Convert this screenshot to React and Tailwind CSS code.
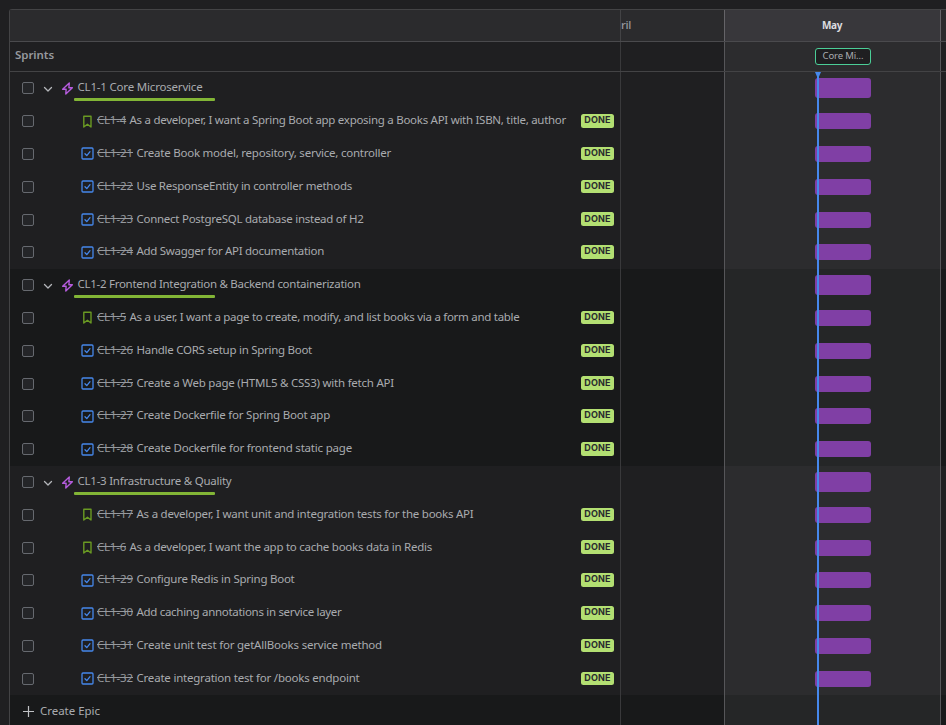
import React from "react";

const GROUPS = [
  {
    id: "CL1-1",
    title: "Core Microservice",
    width: 125,
    items: [
      ["story", "CL1-4", "As a developer, I want a Spring Boot app exposing a Books API with ISBN, title, author", 29, 436.5],
      ["task", "CL1-21", "Create Book model, repository, service, controller", 36, 254.5],
      ["task", "CL1-22", "Use ResponseEntity in controller methods", 36, 215.5],
      ["task", "CL1-23", "Connect PostgreSQL database instead of H2", 36, 227],
      ["task", "CL1-24", "Add Swagger for API documentation", 36, 187.5],
    ],
  },
  {
    id: "CL1-2",
    title: "Frontend Integration & Backend containerization",
    width: 283,
    items: [
      ["story", "CL1-5", "As a user, I want a page to create, modify, and list books via a form and table", 29, 390],
      ["task", "CL1-26", "Handle CORS setup in Spring Boot", 36, 175.5],
      ["task", "CL1-25", "Create a Web page (HTML5 & CSS3) with fetch API", 36, 257.5],
      ["task", "CL1-27", "Create Dockerfile for Spring Boot app", 36, 193.5],
      ["task", "CL1-28", "Create Dockerfile for frontend static page", 36, 215.5],
    ],
  },
  {
    id: "CL1-3",
    title: "Infrastructure & Quality",
    width: 154,
    items: [
      ["story", "CL1-17", "As a developer, I want unit and integration tests for the books API", 36, 337],
      ["story", "CL1-6", "As a developer, I want the app to cache books data in Redis", 29, 302.5],
      ["task", "CL1-29", "Configure Redis in Spring Boot", 36, 158],
      ["task", "CL1-30", "Add caching annotations in service layer", 36, 205],
      ["task", "CL1-31", "Create unit test for getAllBooks service method", 36, 245.5],
      ["task", "CL1-32", "Create integration test for /books endpoint", 36, 223],
    ],
  },
];

// Tracks the text out or in so that it fills the given width.
function Fitted({ width, className = "", children }) {
  const ref = React.useRef(null);
  const [spacing, setSpacing] = React.useState(0);
  const text = String(children);
  React.useLayoutEffect(() => {
    const measure = () => {
      const el = ref.current;
      if (!el) return;
      el.style.letterSpacing = "0px";
      const next = (width - el.getBoundingClientRect().width) / text.length;
      el.style.letterSpacing = next + "px";
      setSpacing(next);
    };
    measure();
    document.fonts.ready.then(measure);
  }, [width, text]);
  return (
    <span ref={ref} className={"inline-block whitespace-pre " + className} style={{ letterSpacing: spacing + "px" }}>
      {text}
    </span>
  );
}

function Checkbox() {
  return <span className="size-3 shrink-0 rounded-[2px] border border-[#66696f] bg-[#242528]" />;
}

function EpicIcon() {
  return (
    <svg className="size-[13px] shrink-0" viewBox="0 0 16 16" fill="none" stroke="#b65cde" strokeWidth="1.7" strokeLinejoin="round">
      <path d="M10.2 1.2 2 8.9h4.3L5.9 14.8 14 7.1H9.7Z" />
    </svg>
  );
}

function StoryIcon() {
  return (
    <svg className="h-[13px] w-[13px] shrink-0" viewBox="0 0 13 13" fill="none" stroke="#6a9a23" strokeWidth="1.4" strokeLinejoin="round">
      <path d="M2.8 1.2h7.2v10.8L6.4 9.2 2.8 12Z" />
    </svg>
  );
}

function TaskIcon() {
  return (
    <svg className="h-[13px] w-[13px] shrink-0" viewBox="0 0 13 13" fill="none" stroke="#4688ec" strokeWidth="1.3" strokeLinejoin="round" strokeLinecap="round">
      <rect x="1" y="1" width="11" height="11" rx="1" />
      <path d="M4 6.8 5.8 8.6 9 4.7" />
    </svg>
  );
}

function Timeline({ children }) {
  return (
    <div className="flex flex-1">
      <div className="w-[104px] shrink-0 border-l border-[#39393b]" />
      <div className="flex w-[217px] shrink-0 items-center border-x border-[#565659] bg-white/[0.06] pl-[90px]">
        {children}
      </div>
    </div>
  );
}

function EpicRow({ id, title, width }) {
  return (
    <div className="flex h-[32.8px]">
      <div className="relative flex w-[610px] shrink-0 items-center pl-3">
        <Checkbox />
        <svg className="mt-[2px] ml-2 size-3" viewBox="0 0 12 12" fill="none" stroke="#b4b6ba" strokeWidth="1.3" strokeLinecap="round" strokeLinejoin="round">
          <path d="M2.5 4.5 6 8l3.5-3.5" />
        </svg>
        <span className="ml-[7px] flex pt-px"><EpicIcon /></span>
        <Fitted width={width} className="-mt-[2px] ml-[3.5px]">{id + " " + title}</Fitted>
        <span className="absolute top-[26px] left-16 h-[3px] w-[141px] rounded-[1px] bg-[#82b536]" />
      </div>
      <Timeline>
        <div className="h-5 w-14 rounded-[3px] bg-[#803fa5]" />
      </Timeline>
    </div>
  );
}

function ItemRow({ item }) {
  const [kind, id, title, idWidth, width] = item;
  return (
    <div className="flex h-[32.8px]">
      <div className="flex w-[610px] shrink-0 items-center pl-3">
        <Checkbox />
        <span className="ml-[47px] flex">{kind === "story" ? <StoryIcon /> : <TaskIcon />}</span>
        <Fitted width={idWidth} className="-mt-[2px] ml-[3px] text-[#96999e] line-through">{id}</Fitted>
        <Fitted width={width} className="-mt-[2px] ml-[3.5px]">{title}</Fitted>
        <span className="-mt-[0.8px] mr-1.5 ml-auto flex h-[13.5px] w-[33px] items-center justify-center rounded-[2.5px] bg-[#b3df72] font-['Inter'] text-[9px] font-bold text-[#292a2e]">
          <Fitted width={26.5} className="-mt-px">DONE</Fitted>
        </span>
      </div>
      <Timeline>
        <div className="h-4 w-14 rounded-[3px] bg-[#803fa5]" />
      </Timeline>
    </div>
  );
}

export default function App() {
  return (
    <div className="h-[725px] w-[946px] overflow-hidden bg-[#1f1f21] pt-[9px] pl-[9px] font-['Noto_Sans',sans-serif] text-[11.5px] leading-4 text-[#a9abaf]">
      <div className="relative h-[720px] w-[940px] rounded-tl-[3px] border-t border-l border-[#434345]">
        <div className="flex h-8 border-b border-[#4a4a4d] bg-[#2b2b2d]">
          <div className="w-[610px] shrink-0" />
          <div className="flex w-[104px] shrink-0 items-center border-l border-[#434345] font-medium text-[#96999e]">
            <Fitted width={10} className="-mt-px">ril</Fitted>
          </div>
          <div className="flex w-[217px] shrink-0 items-center justify-center border-x border-[#656468] bg-[#38373b] font-bold text-[#dcdde0]">
            <Fitted width={20} className="-mt-px -ml-px text-[10px]">May</Fitted>
          </div>
        </div>
        <div className="flex h-[30px] border-b border-[#434345]">
          <div className="w-[610px] shrink-0 pt-[5px] pl-[5px] font-semibold text-[#96999e]">
            <Fitted width={39}>Sprints</Fitted>
          </div>
          <Timeline>
            <div className="flex h-[17px] w-14 items-center justify-center rounded-[3px] border border-[#4bce97] bg-[#1f1f21] text-[9.5px]">
              <Fitted width={41} className="-mt-px">Core Mi…</Fitted>
            </div>
          </Timeline>
        </div>
        {GROUPS.map((g, i) => (
          <div key={g.id} className={i % 2 ? "bg-[#18191a]" : "bg-[#1f1f21]"}>
            <EpicRow id={g.id} title={g.title} width={g.width} />
            {g.items.map((item) => (
              <ItemRow key={item[1]} item={item} />
            ))}
          </div>
        ))}
        <div className="flex h-[40px] bg-[#18191a]">
          <div className="flex w-[610px] shrink-0 items-start pt-[8px] pl-3">
            <svg className="mt-[2px] size-[13px]" viewBox="0 0 13 13" stroke="#c0c2c5" strokeWidth="1.2">
              <path d="M6.5 1v11M1 6.5h11" />
            </svg>
            <Fitted width={60} className="ml-[5px]">Create Epic</Fitted>
          </div>
          <Timeline />
        </div>
        <div className="absolute top-[62px] left-[805px] flex h-[660px] w-[6px] flex-col items-center">
          <svg className="h-[5px] w-[6px]" viewBox="0 0 6 5" fill="#4688ec">
            <path d="M0 0h6L4 4.5H2Z" />
          </svg>
          <div className="-mt-px w-[2px] flex-1 bg-[#4688ec]" />
        </div>
      </div>
    </div>
  );
}
